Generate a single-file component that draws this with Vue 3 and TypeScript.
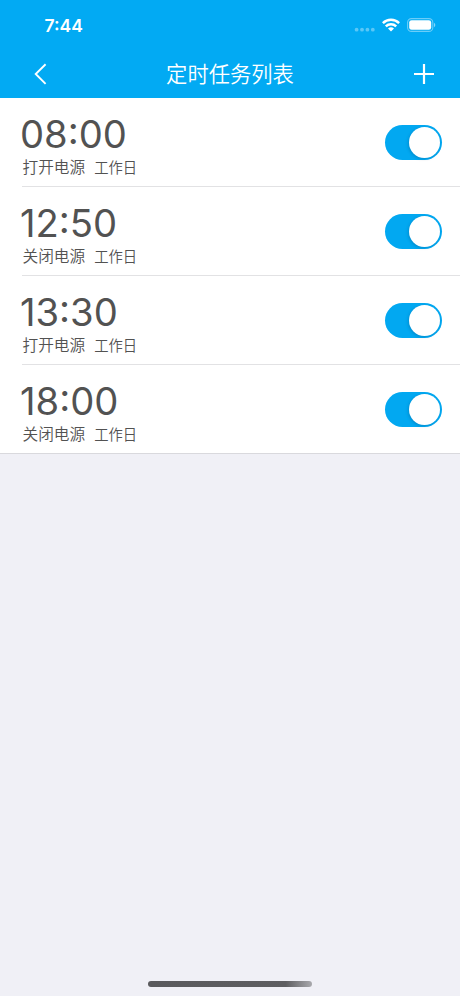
<script setup lang="ts">
import { ref } from 'vue'

interface Task {
  time: string
  action: string
  repeat: string
  enabled: boolean
}

const tasks = ref<Task[]>([
  { time: '08:00', action: '打开电源', repeat: '工作日', enabled: true },
  { time: '12:50', action: '关闭电源', repeat: '工作日', enabled: true },
  { time: '13:30', action: '打开电源', repeat: '工作日', enabled: true },
  { time: '18:00', action: '关闭电源', repeat: '工作日', enabled: true },
])
</script>

<template>
  <div class="screen">
    <header class="top">
      <div class="status">
        <span class="clock">7:44</span>
        <div class="indicators">
          <svg class="dots" width="22" height="16" viewBox="0 0 22 16">
            <g fill="#fff" opacity="0.35">
              <circle cx="2.6" cy="11.7" r="1.9" />
              <circle cx="8" cy="11.7" r="1.9" />
              <circle cx="13.4" cy="11.7" r="1.9" />
              <circle cx="18.8" cy="11.7" r="1.9" />
            </g>
          </svg>
          <svg class="wifi" width="18" height="14" viewBox="0 0 18 14">
            <g fill="none" stroke="#fff" stroke-width="2.5">
              <path d="M0.9 5.1a11.6 11.6 0 0 1 16.2 0" />
              <path d="M3.8 8.3a7.4 7.4 0 0 1 10.4 0" />
            </g>
            <path d="M9 13.5 6 10.6a4.4 4.4 0 0 1 6 0z" fill="#fff" />
          </svg>
          <svg class="battery" width="29" height="14" viewBox="0 0 29 14">
            <rect x="0.6" y="0.6" width="25.2" height="12.8" rx="3.9" fill="none" stroke="#fff" stroke-opacity="0.42" stroke-width="1.1" />
            <rect x="2.2" y="2.2" width="22" height="9.6" rx="2.4" fill="#fff" />
            <path d="M27 4.8a2.5 2.5 0 0 1 0 4.4z" fill="#fff" opacity="0.5" />
          </svg>
        </div>
      </div>
      <nav class="nav">
        <button class="icon-btn" aria-label="返回">
          <svg width="14" height="24" viewBox="0 0 14 24">
            <path d="M12.6 2.2 2.7 12l9.9 9.9" fill="none" stroke="#fff" stroke-width="1.9" />
          </svg>
        </button>
        <h1 class="title">定时任务列表</h1>
        <button class="icon-btn" aria-label="添加">
          <svg width="20" height="20" viewBox="0 0 20 20">
            <path d="M10 0v20M0 10h20" fill="none" stroke="#fff" stroke-width="2.2" />
          </svg>
        </button>
      </nav>
    </header>

    <ul class="list">
      <li v-for="task in tasks" :key="task.time" class="row">
        <div class="info">
          <div class="time">{{ task.time }}</div>
          <div class="meta">
            <span class="action">{{ task.action }}</span>
            <span class="repeat">{{ task.repeat }}</span>
          </div>
        </div>
        <button
          class="switch"
          :class="{ on: task.enabled }"
          role="switch"
          :aria-checked="task.enabled"
          @click="task.enabled = !task.enabled"
        >
          <span class="knob"></span>
        </button>
      </li>
    </ul>

    <div class="home"><span class="bar"></span></div>
  </div>
</template>

<style>
body {
  margin: 0;
  background: #f0f0f6;
}
</style>

<style scoped>
.screen {
  display: flex;
  flex-direction: column;
  height: 996px;
  background: #f0f0f6;
  font-family: Inter, "Noto Sans CJK SC", sans-serif;
  overflow: hidden;
}
button {
  border: 0;
  padding: 0;
  background: none;
}
.top {
  height: 98px;
  background: #02aaf3;
  color: #fff;
}
.status {
  display: flex;
  justify-content: space-between;
  align-items: center;
  height: 50px;
  padding: 0 24px 0 44.5px;
  box-sizing: border-box;
}
.clock {
  font-size: 17.5px;
  font-weight: 600;
  line-height: 20px;
  padding-top: 1px;
}
.indicators {
  display: flex;
  align-items: center;
}
.dots {
  margin: 2px 6px 0 0;
}
.wifi {
  margin-right: 7px;
}
.nav {
  display: flex;
  align-items: center;
  justify-content: space-between;
  height: 48px;
  padding: 0 26px 0 30px;
}
.icon-btn {
  display: flex;
  align-items: center;
  justify-content: center;
  width: 20px;
  height: 28px;
}
.title {
  margin: 0 4px 1px 0;
  font-size: 21.3px;
  font-weight: 350;
  line-height: 30px;
}
.list {
  margin: 0;
  padding: 0;
  list-style: none;
  background: #fff;
  border-bottom: 1px solid #d9d9dd;
}
.row {
  display: flex;
  height: 89px;
  justify-content: space-between;
  box-sizing: border-box;
  margin-left: 22px;
  padding: 0 18px 0 0;
  border-bottom: 1px solid #e2e2e4;
}
.row:last-child {
  height: 88px;
  border-bottom: 0;
}
.info {
  color: #525252;
}
.time {
  margin: 12px 0 0 -2px;
  font-size: 38.2px;
  font-weight: 400;
  font-feature-settings: "calt", "case";
  line-height: 48px;
}
.meta {
  display: flex;
  align-items: baseline;
  gap: 9px;
  margin-left: 0.5px;
  line-height: 20px;
  font-weight: 350;
}
.action {
  font-size: 15.7px;
}
.repeat {
  font-size: 14.3px;
}
.switch {
  display: flex;
  justify-content: flex-start;
  align-items: center;
  width: 57px;
  height: 35px;
  margin-top: 27px;
  padding: 0 2px;
  box-sizing: border-box;
  border-radius: 18px;
  background: #d5d5d8;
}
.switch.on {
  justify-content: flex-end;
  background: #02a8f1;
}
.knob {
  width: 31px;
  height: 31px;
  border-radius: 50%;
  background: #fff;
  box-shadow: -1px 1px 3px rgba(0, 50, 90, 0.22);
}
.home {
  display: flex;
  justify-content: center;
  margin-top: auto;
  padding-bottom: 9px;
}
.bar {
  width: 164px;
  height: 6px;
  border-radius: 3px;
  background: linear-gradient(90deg, #5a5a5d 0%, #5e5e61 84%, #a9a9ad 100%);
}
</style>
